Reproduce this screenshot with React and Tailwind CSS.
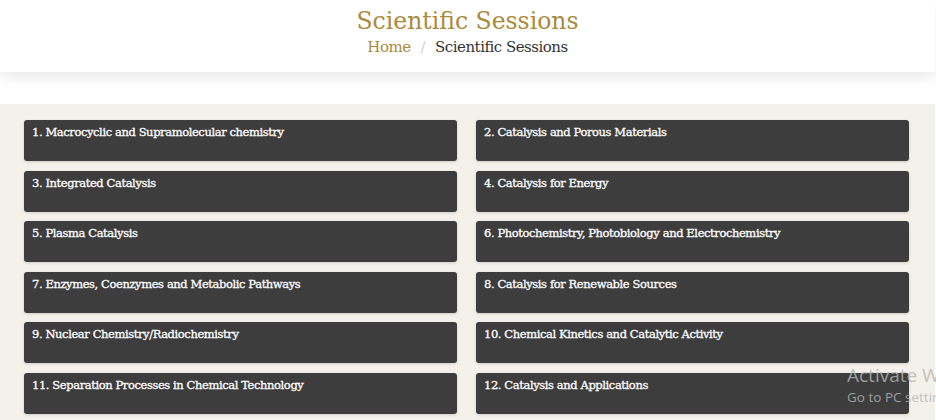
const sessions = [
  'Macrocyclic and Supramolecular chemistry',
  'Catalysis and Porous Materials',
  'Integrated Catalysis',
  'Catalysis for Energy',
  'Plasma Catalysis',
  'Photochemistry, Photobiology and Electrochemistry',
  'Enzymes, Coenzymes and Metabolic Pathways',
  'Catalysis for Renewable Sources',
  'Nuclear Chemistry/Radiochemistry',
  'Chemical Kinetics and Catalytic Activity',
  'Separation Processes in Chemical Technology',
  'Catalysis and Applications',
]

export default function App() {
  return (
    <div className="relative h-[420px] w-[936px] overflow-hidden bg-white font-['DejaVu_Serif','Liberation_Serif',serif]">
      <header className="flex h-[72px] w-[935px] flex-col items-center bg-white pt-[5px] shadow-[0_6px_12px_rgba(0,0,0,0.08)]">
        <h1 className="text-[23.5px] leading-[32px] tracking-[0px] text-[#a98a3c]">Scientific Sessions</h1>
        <nav className="flex items-center text-[15px] leading-[20px] tracking-[-0.5px]">
          <span className="text-[#a98a3c]">Home</span>
          <span className="mx-[10px] text-[#cfcfcf]">/</span>
          <span className="text-[#333]">Scientific Sessions</span>
        </nav>
      </header>

      <section className="mt-[32px] h-[330px] w-[935px] bg-[#f4f1eb] pt-[16px]">
        <div className="ml-[24px] grid w-[885px] grid-cols-2 gap-x-[19px] gap-y-[9.6px]">
          {sessions.map((title, i) => (
            <div
              key={title}
              className="h-[41px] rounded-[3px] bg-[#3d3d3d] px-[8px] pt-[4px] text-[11.5px] leading-[16px] tracking-[-0.4px] text-white shadow-[0_1px_3px_rgba(0,0,0,0.15)] [-webkit-text-stroke:0.3px_white]"
            >
              {i + 1}. {title}
            </div>
          ))}
        </div>
      </section>

      <div className="pointer-events-none absolute left-[847px] top-[362px] whitespace-nowrap font-['Open_Sans',sans-serif] text-[#b5b5b5]">
        <div className="text-[19px] leading-[26px] opacity-80">Activate Windows</div>
        <div className="text-[13.5px] leading-[18px] opacity-80">Go to PC settings to activate Windows.</div>
      </div>
    </div>
  )
}
